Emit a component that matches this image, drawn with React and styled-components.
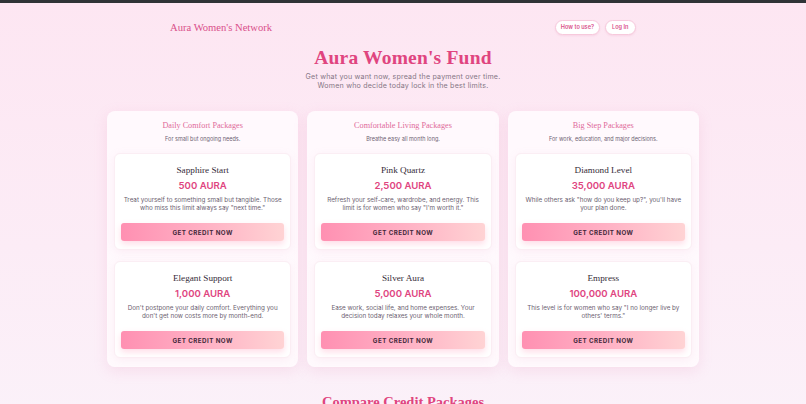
import styled, { createGlobalStyle } from 'styled-components';

const GlobalStyle = createGlobalStyle`
  html, body {
    margin: 0;
    padding: 0;
  }
  body {
    font-family: Inter, "Liberation Sans", sans-serif;
    background: linear-gradient(180deg, #fde6f2 0%, #fcecf6 60%, #fbf1f9 100%);
    min-height: 404px;
    overflow: hidden;
  }
`

const serif = `"Liberation Serif", "DejaVu Serif", serif`

const TopBar = styled.div`
  height: 3px;
  background: #2f3336;
`

const Page = styled.div`
  display: flex;
  flex-direction: column;
  align-items: center;
`

const Nav = styled.nav`
  box-sizing: border-box;
  width: 466px;
  height: 44px;
  padding-top: 4px;
  display: flex;
  align-items: center;
  justify-content: space-between;
`

const Logo = styled.div`
  font-family: ${serif};
  font-size: 10.6px;
  color: #d9508a;
`

const NavButtons = styled.div`
  display: flex;
  gap: 5px;
`

const NavButton = styled.button`
  height: 15px;
  padding: 0 ${p => p.$wide ? 6.5 : 4.5}px;
  border-radius: 8px;
  border: 1px solid #f7c9dc;
  background: #fff;
  color: #d9508a;
  font-family: Inter, sans-serif;
  font-size: 5.6px;
  font-weight: 600;
  box-shadow: 0 1px 2px rgba(217, 80, 138, 0.12);
`

const Title = styled.h1`
  margin: 0;
  font-family: ${serif};
  font-size: 19.5px;
  font-weight: 700;
  color: #e0457f;
  letter-spacing: 0.2px;
  line-height: 22px;
`

const Subtitle = styled.p`
  margin: 3px 0 0;
  font-size: 7.1px;
  line-height: 9px;
  color: #857685;
  text-align: center;
  letter-spacing: 0.2px;
`

const Grid = styled.div`
  margin-top: 21px;
  width: 592px;
  display: grid;
  grid-template-columns: repeat(3, 1fr);
  gap: 9px;
`

const Panel = styled.section`
  background: rgba(255, 252, 254, 0.85);
  border-radius: 8px;
  box-shadow: 0 4px 14px rgba(230, 140, 185, 0.18);
  padding: 9px 7px 9px;
  display: flex;
  flex-direction: column;
`

const PanelTitle = styled.h2`
  margin: 0;
  font-family: ${serif};
  font-size: 8.2px;
  font-weight: 400;
  color: #e06a9a;
  text-align: center;
  line-height: 11px;
`

const PanelSub = styled.p`
  margin: 4px 0 10px;
  font-size: 5.5px;
  color: #6e6272;
  text-align: center;
  line-height: 8px;
`

const Cards = styled.div`
  display: flex;
  flex-direction: column;
  gap: 11px;
`

const Card = styled.div`
  background: #fff;
  border-radius: 6px;
  border: 1px solid #fbeef4;
  box-shadow: 0 2px 8px rgba(230, 150, 190, 0.12);
  padding: 10px 6px 8px;
  display: flex;
  flex-direction: column;
  align-items: center;
`

const CardName = styled.h3`
  margin: 0;
  font-family: ${serif};
  font-size: 9.2px;
  font-weight: 400;
  color: #352b38;
  line-height: 12px;
`

const Price = styled.div`
  margin-top: 3px;
  font-size: 9.6px;
  font-weight: 600;
  color: #e0457f;
  line-height: 13px;
`

const Desc = styled.p`
  margin: 4px 0 0;
  font-size: 6.3px;
  line-height: 8px;
  color: #6b6070;
  text-align: center;
  min-height: 16px;
`

const CtaButton = styled.button`
  margin-top: 11px;
  width: 100%;
  height: 18px;
  border: none;
  border-radius: 3px;
  background: linear-gradient(90deg, #ff90b2 0%, #ffb0c4 50%, #ffd3d4 100%);
  box-shadow: 0 3px 6px rgba(255, 130, 170, 0.28);
  color: #43283a;
  font-family: Inter, sans-serif;
  font-size: 6.2px;
  font-weight: 700;
  letter-spacing: 0.45px;
`

const Compare = styled.h2`
  margin: 26px 0 0;
  font-family: ${serif};
  font-size: 14.5px;
  line-height: 18px;
  font-weight: 700;
  color: #e0457f;
`

const panels = [
  {
    title: 'Daily Comfort Packages',
    sub: 'For small but ongoing needs.',
    cards: [
      { name: 'Sapphire Start', price: '500 AURA', desc: 'Treat yourself to something small but tangible. Those who miss this limit always say "next time."' },
      { name: 'Elegant Support', price: '1,000 AURA', desc: "Don't postpone your daily comfort. Everything you don't get now costs more by month-end." },
    ],
  },
  {
    title: 'Comfortable Living Packages',
    sub: 'Breathe easy all month long.',
    cards: [
      { name: 'Pink Quartz', price: '2,500 AURA', desc: 'Refresh your self-care, wardrobe, and energy. This limit is for women who say "I\'m worth it."' },
      { name: 'Silver Aura', price: '5,000 AURA', desc: 'Ease work, social life, and home expenses. Your decision today relaxes your whole month.' },
    ],
  },
  {
    title: 'Big Step Packages',
    sub: 'For work, education, and major decisions.',
    cards: [
      { name: 'Diamond Level', price: '35,000 AURA', desc: 'While others ask "how do you keep up?", you\'ll have your plan done.' },
      { name: 'Empress', price: '100,000 AURA', desc: 'This level is for women who say "I no longer live by others\' terms."' },
    ],
  },
]

function App() {
  return (
    <>
      <GlobalStyle />
      <TopBar />
      <Page>
        <Nav>
          <Logo>Aura Women's Network</Logo>
          <NavButtons>
            <NavButton>How to use?</NavButton>
            <NavButton $wide>Log In</NavButton>
          </NavButtons>
        </Nav>
        <Title>Aura Women's Fund</Title>
        <Subtitle>
          Get what you want now, spread the payment over time.<br />
          Women who decide today lock in the best limits.
        </Subtitle>
        <Grid>
          {panels.map(panel => (
            <Panel key={panel.title}>
              <PanelTitle>{panel.title}</PanelTitle>
              <PanelSub>{panel.sub}</PanelSub>
              <Cards>
                {panel.cards.map(card => (
                  <Card key={card.name}>
                    <CardName>{card.name}</CardName>
                    <Price>{card.price}</Price>
                    <Desc>{card.desc}</Desc>
                    <CtaButton>GET CREDIT NOW</CtaButton>
                  </Card>
                ))}
              </Cards>
            </Panel>
          ))}
        </Grid>
        <Compare>Compare Credit Packages</Compare>
      </Page>
    </>
  );
}

export default App;
